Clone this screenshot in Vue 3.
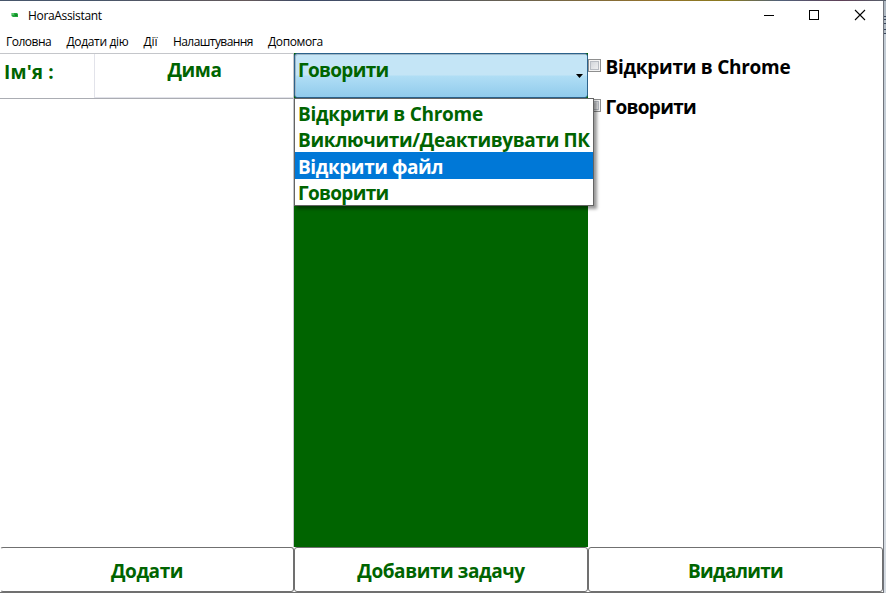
<script setup>
const menu = [
  { text: 'Головна', cls: 'm1' },
  { text: 'Додати дію', cls: 'm2' },
  { text: 'Дії', cls: 'm3' },
  { text: 'Налаштування', cls: 'm4' },
  { text: 'Допомога', cls: 'm5' },
]
const options = [
  { text: 'Відкрити в Chrome', cls: 'loose' },
  { text: 'Виключити/Деактивувати ПК', cls: 'long' },
  { text: 'Відкрити файл', cls: '' },
  { text: 'Говорити', cls: 'tight' },
]
const highlighted = 2
const tasks = [options[0], options[3]]
</script>

<template>
  <div class="desktop">
    <div class="backdrop"></div>
    <div class="shell">
      <div class="window">
        <header class="titlebar">
          <svg class="logo" width="8" height="6" viewBox="0 0 8 6">
            <path d="M0.5 1H6L7 2V5H2L0.5 4Z" fill="#20a83a" />
            <path d="M4 2.5H6V4H4Z" fill="#157c24" />
            <path d="M1 1H3V3H1Z" fill="#55c566" />
          </svg>
          <span class="title">HoraAssistant</span>
          <svg class="controls" width="120" height="30" viewBox="0 0 120 30" fill="none" stroke="#000" shape-rendering="crispEdges">
            <path d="M14 14.5H24" />
            <rect x="59.5" y="9.5" width="9" height="9" />
            <path d="M105 9L115 19M115 9L105 19" shape-rendering="auto" stroke-width="1.1" />
          </svg>
        </header>
        <nav class="menu">
          <span v-for="m in menu" :key="m.text" :class="m.cls">{{ m.text }}</span>
        </nav>
        <main class="columns">
          <section class="left">
            <div class="namerow">
              <label class="big name">Ім'я :</label>
              <div class="big field">Дима</div>
            </div>
          </section>
          <section class="middle">
            <div class="big combo">
              <span class="tight">Говорити</span>
              <svg class="arrow" width="7" height="4" viewBox="0 0 7 4"><path d="M0 0H7L3.5 4Z" /></svg>
            </div>
            <ul class="list">
              <li v-for="(o, i) in options" :key="o.text" class="big" :class="[o.cls, { active: i === highlighted }]">{{ o.text }}</li>
            </ul>
          </section>
          <section class="right">
            <label v-for="t in tasks" :key="t.text" class="task"><i class="box"></i><span class="big" :class="t.cls">{{ t.text }}</span></label>
          </section>
        </main>
        <footer class="actions">
          <button class="big">Додати</button>
          <button class="big">Добавити задачу</button>
          <button class="big tight">Видалити</button>
        </footer>
      </div>
      <div class="behind"></div>
    </div>
  </div>
</template>

<style>
body { overflow: hidden; background: #fff; }
</style>

<style scoped>
* { box-sizing: border-box; }
.desktop { width: 886px; height: 594px; font-family: "Open Sans", "Noto Sans", sans-serif; font-size: 12px; color: #000; display: flex; flex-direction: column; }
.backdrop { height: 1px; flex: none; background: linear-gradient(90deg, #47566b 0 10%, #65595a 28%, #3c4966 34%, #505767 48%, #93722b 74%, #8a7a1e 82%, #51617a 88%, #604057 95%, #57616c); }
.shell { display: flex; height: 592px; }
.window { width: 884px; border-right: 1px solid #70747c; border-bottom: 1px solid #707070; display: flex; flex-direction: column; background: #fff; }
.behind { width: 2px; background: linear-gradient(#aeb8c2 0 15px, #39465c 15px 16px, #aeb8c2 16px 18px, #39465c 18px 19px, #aeb8c2 19px 22px, #39465c 22px 23px, #aeb8c2 23px 28px, #39465c 28px 29px, #aeb8c2 29px 32px, #39465c 32px 33px, #c3ccd5 33px 60px, #d5dbe2); }
.titlebar { height: 30px; flex: none; display: flex; padding-left: 11px; }
.logo { margin: 11px 9px 0 0; }
.title { line-height: 30px; flex: 1; letter-spacing: -0.33px; }
.controls { margin-right: 13px; }
.menu { height: 22px; flex: none; display: flex; line-height: 22px; padding-left: 6px; white-space: nowrap; }
.menu span { letter-spacing: -0.5px; }
.menu .m1 { width: 60.5px; }
.menu .m2 { width: 77px; letter-spacing: -0.35px; }
.menu .m3 { width: 29.5px; letter-spacing: -0.1px; }
.menu .m4 { width: 95px; letter-spacing: -0.58px; }
.menu .m5 { letter-spacing: -0.4px; }
.big { font-size: 19px; font-weight: 700; line-height: 28px; color: #006400; white-space: nowrap; letter-spacing: -0.42px; }
.tight { letter-spacing: -0.7px; }
.loose { letter-spacing: -0.27px; }
.long { letter-spacing: -0.36px; }
.columns { height: 494px; flex: none; display: grid; grid-template-columns: 294px 294px 295px; }
.left { border-right: 1px solid #c4c6ca; }
.namerow { height: 46px; display: flex; border-top: 1px solid #c4c6ca; border-bottom: 1px solid #abadb3; }
.name { width: 94px; padding: 4px 0 0 4px; letter-spacing: 0.15px; }
.field { flex: 1; text-align: center; padding: 2px 0 0 1px; border-left: 1px solid #e2e3ea; border-bottom: 1px solid #e2e3ea; }
.middle { position: relative; background: #006400; }
.combo { height: 45px; display: flex; justify-content: space-between; padding: 2px 4px 0 3px; border: 1px solid #2c628b; border-radius: 3px; background: linear-gradient(#c4e5f6 0 49%, #b0def5 51%, #91cbec); box-shadow: inset 1px 1px #9fb8c8; }
.arrow { margin-top: 18px; }
.list { position: absolute; z-index: 1; left: 0; top: 45px; width: 300px; height: 108px; margin: 0; padding: 0; list-style: none; background: #fff; border: 1px solid #646464; box-shadow: 3px 3px 3px rgba(0, 0, 0, .4); }
.list li { height: 26.5px; padding-left: 3px; line-height: 30px; }
.list li:nth-child(even) { line-height: 28.5px; }
.list li.active { background: #0078d7; color: #fff; }
.right { display: flex; flex-direction: column; }
.task { display: flex; height: 40px; }
.task .big { color: #000; margin-left: 4.5px; }
.box { width: 13px; height: 13px; margin-top: 6px; border: 1px solid #8e8f8f; background: linear-gradient(135deg, #cbcfd5, #f6f6f6); box-shadow: inset 0 0 0 1px #f4f4f4, inset 0 0 0 2px #b8bcc3; }
.actions { flex: none; height: 45px; display: grid; grid-template-columns: 294px 294px 295px; background: #fff; }
.actions button { font-family: inherit; background: #fff; border: 1px solid #707070; border-radius: 3px; padding: 3px 0 0; }
.actions button:first-child { border-left-color: #fff; }
</style>
